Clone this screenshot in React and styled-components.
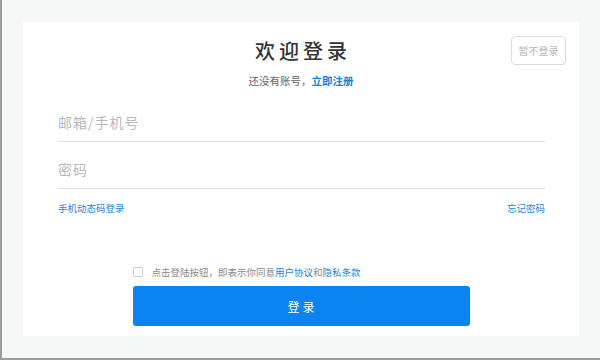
import React from "react";
import styled, { createGlobalStyle } from "styled-components";

const Global = createGlobalStyle`
  html, body { margin: 0; padding: 0; background: #f6f7f7; }
  body { font-family: "Noto Sans CJK SC", "Noto Sans", sans-serif; }
  * { box-sizing: border-box; }
`;

const Page = styled.div`
  width: 600px;
  height: 360px;
  background: #f6f7f7;
  border-left: 2px solid #9c9c9c;
  border-bottom: 2px solid #9c9c9c;
  padding: 22px 21px 0 21px;
`;

const Card = styled.div`
  height: 314px;
  background: #ffffff;
  padding: 14px 13px 10px;
  display: flex;
  flex-direction: column;
`;

const Header = styled.div`
  display: grid;
  grid-template-columns: 1fr auto 1fr;
  align-items: start;
`;

const TitleBlock = styled.div`
  grid-column: 2;
  display: flex;
  flex-direction: column;
  align-items: center;
  padding-top: 1px;
`;

const Title = styled.h1`
  margin: 0;
  font-size: 20px;
  line-height: 28px;
  font-weight: 500;
  color: #333;
  letter-spacing: 4px;
  padding-left: 4px;
`;

const Subtitle = styled.p`
  margin: 9px 0 0;
  font-size: 10.5px;
  line-height: 14px;
  color: #666;
`;

const Link = styled.a`
  color: ${(p) => (p.$strong ? "#1a7fd6" : "#2484d6")};
  font-weight: ${(p) => (p.$strong ? 700 : 400)};
  text-decoration: none;
`;

const SkipButton = styled.button`
  grid-column: 3;
  justify-self: end;
  width: 55px;
  height: 29px;
  border: 1px solid #dcdcdc;
  border-radius: 4px;
  background: #fff;
  color: #b8b8b8;
  font-family: inherit;
  font-size: 10px;
  padding: 0;
`;

const Form = styled.div`
  padding: 0 21px 0 22px;
  margin-top: 14px;
  display: flex;
  flex-direction: column;
  gap: 7px;
`;

const Field = styled.div`
  height: 40px;
  display: flex;
  align-items: center;
  border-bottom: 1px solid #dedede;
  padding-top: 1px;
`;

const Placeholder = styled.span`
  font-size: 14px;
  color: #b9b9b9;
  letter-spacing: 1px;
`;

const LinksRow = styled.div`
  display: flex;
  justify-content: space-between;
  margin-top: 5px;
  font-size: 9.5px;
  line-height: 14px;
`;

const Bottom = styled.div`
  margin-top: auto;
  align-self: center;
  width: 337px;
  display: flex;
  flex-direction: column;
  gap: 7px;
`;

const Agree = styled.div`
  display: flex;
  align-items: center;
  gap: 9px;
  font-size: 9.5px;
  line-height: 14px;
  color: #8a8a8a;
`;

const Box = styled.span`
  width: 10px;
  height: 10px;
  border: 1px solid #cfcfcf;
  border-radius: 2px;
  background: #fff;
`;

const LoginButton = styled.button`
  height: 40px;
  border: none;
  border-radius: 3px;
  background: #0a84f0;
  color: #fff;
  font-family: inherit;
  font-size: 12px;
  letter-spacing: 3px;
  padding: 0 0 0 3px;
`;

export default function App() {
  return (
    <>
      <Global />
      <Page>
        <Card>
          <Header>
            <TitleBlock>
              <Title>欢迎登录</Title>
              <Subtitle>
                还没有账号，<Link $strong>立即注册</Link>
              </Subtitle>
            </TitleBlock>
            <SkipButton>暂不登录</SkipButton>
          </Header>
          <Form>
            <Field>
              <Placeholder>邮箱/手机号</Placeholder>
            </Field>
            <Field>
              <Placeholder>密码</Placeholder>
            </Field>
            <LinksRow>
              <Link>手机动态码登录</Link>
              <Link>忘记密码</Link>
            </LinksRow>
          </Form>
          <Bottom>
            <Agree>
              <Box />
              <span>
                点击登陆按钮，即表示你同意<Link>用户协议</Link>和<Link>隐私条款</Link>
              </span>
            </Agree>
            <LoginButton>登录</LoginButton>
          </Bottom>
        </Card>
      </Page>
    </>
  );
}
